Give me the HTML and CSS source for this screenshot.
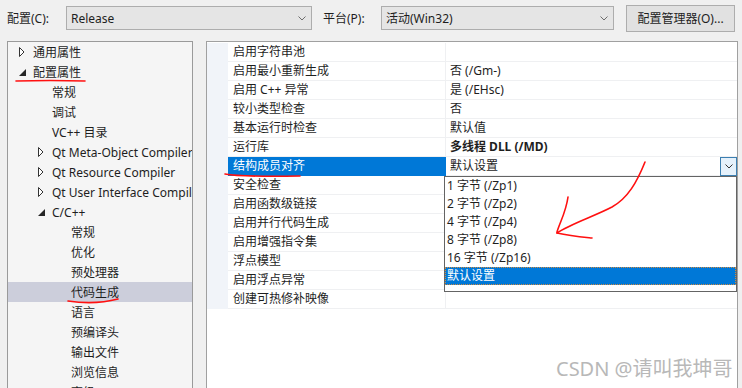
FILE: index.html
```html
<!DOCTYPE html>
<html lang="zh-CN">
<head>
    <meta charset="UTF-8">
    <title>属性页</title>
    <link rel="stylesheet" href="styles.css">
</head>
<body>
    <!-- top configuration bar -->
    <div class="toolbar">
        <span class="tb-label">配置(C):</span>
        <div class="combo combo-config">
            <span>Release</span>
            <svg class="chev" width="8" height="5" viewBox="0 0 8 5"><path d="M0.5 0.5 L4 4 L7.5 0.5" fill="none" stroke="#6d6d6d"/></svg>
        </div>
        <span class="tb-label tb-label-platform">平台(P):</span>
        <div class="combo combo-platform">
            <span>活动(Win32)</span>
            <svg class="chev" width="8" height="5" viewBox="0 0 8 5"><path d="M0.5 0.5 L4 4 L7.5 0.5" fill="none" stroke="#6d6d6d"/></svg>
        </div>
        <div class="btn">配置管理器(O)...</div>
    </div>

    <div class="main">
        <!-- left tree -->
        <div class="tree">
            <div class="node lv0"><span class="tw"><svg width="6" height="10" viewBox="0 0 6 10"><polygon points="0.5,0.5 5,5 0.5,9.5" fill="#fff" stroke="#333"/></svg></span>通用属性</div>
            <div class="node lv0"><span class="tw"><svg width="7" height="7" viewBox="0 0 7 7"><polygon points="7,0 7,7 0,7" fill="#262626"/></svg></span>配置属性</div>
            <div class="node lv1"><span class="tw"></span>常规</div>
            <div class="node lv1"><span class="tw"></span>调试</div>
            <div class="node lv1"><span class="tw"></span>VC++ 目录</div>
            <div class="node lv1"><span class="tw"><svg width="6" height="10" viewBox="0 0 6 10"><polygon points="0.5,0.5 5,5 0.5,9.5" fill="#fff" stroke="#333"/></svg></span>Qt Meta-Object Compiler</div>
            <div class="node lv1"><span class="tw"><svg width="6" height="10" viewBox="0 0 6 10"><polygon points="0.5,0.5 5,5 0.5,9.5" fill="#fff" stroke="#333"/></svg></span>Qt Resource Compiler</div>
            <div class="node lv1"><span class="tw"><svg width="6" height="10" viewBox="0 0 6 10"><polygon points="0.5,0.5 5,5 0.5,9.5" fill="#fff" stroke="#333"/></svg></span>Qt User Interface Compiler</div>
            <div class="node lv1"><span class="tw"><svg width="7" height="7" viewBox="0 0 7 7"><polygon points="7,0 7,7 0,7" fill="#262626"/></svg></span>C/C++</div>
            <div class="node lv2"><span class="tw"></span>常规</div>
            <div class="node lv2"><span class="tw"></span>优化</div>
            <div class="node lv2"><span class="tw"></span>预处理器</div>
            <div class="node lv2 selected"><span class="tw"></span>代码生成</div>
            <div class="node lv2"><span class="tw"></span>语言</div>
            <div class="node lv2"><span class="tw"></span>预编译头</div>
            <div class="node lv2"><span class="tw"></span>输出文件</div>
            <div class="node lv2"><span class="tw"></span>浏览信息</div>
            <div class="node lv2"><span class="tw"></span>高级</div>
        </div>

        <!-- property grid -->
        <div class="grid">
            <div class="row"><div class="strip"></div><div class="name">启用字符串池</div><div class="value"></div></div>
            <div class="row"><div class="strip"></div><div class="name">启用最小重新生成</div><div class="value">否 (/Gm-)</div></div>
            <div class="row"><div class="strip"></div><div class="name">启用 C++ 异常</div><div class="value">是 (/EHsc)</div></div>
            <div class="row"><div class="strip"></div><div class="name">较小类型检查</div><div class="value">否</div></div>
            <div class="row"><div class="strip"></div><div class="name">基本运行时检查</div><div class="value">默认值</div></div>
            <div class="row"><div class="strip"></div><div class="name">运行库</div><div class="value bold">多线程 DLL (/MD)</div></div>
            <div class="row active">
                <div class="strip"></div>
                <div class="name">结构成员对齐</div>
                <div class="value">
                    <span>默认设置</span>
                    <span class="drop-btn"><svg width="8" height="5" viewBox="0 0 8 5"><path d="M0.5 0.5 L4 4 L7.5 0.5" fill="none" stroke="#333"/></svg></span>
                    <div class="droplist">
                        <div class="opt">1 字节 (/Zp1)</div>
                        <div class="opt">2 字节 (/Zp2)</div>
                        <div class="opt">4 字节 (/Zp4)</div>
                        <div class="opt">8 字节 (/Zp8)</div>
                        <div class="opt">16 字节 (/Zp16)</div>
                        <div class="opt current">默认设置</div>
                    </div>
                </div>
            </div>
            <div class="row"><div class="strip"></div><div class="name">安全检查</div><div class="value"></div></div>
            <div class="row"><div class="strip"></div><div class="name">启用函数级链接</div><div class="value"></div></div>
            <div class="row"><div class="strip"></div><div class="name">启用并行代码生成</div><div class="value"></div></div>
            <div class="row"><div class="strip"></div><div class="name">启用增强指令集</div><div class="value"></div></div>
            <div class="row"><div class="strip"></div><div class="name">浮点模型</div><div class="value"></div></div>
            <div class="row"><div class="strip"></div><div class="name">启用浮点异常</div><div class="value"></div></div>
            <div class="row"><div class="strip"></div><div class="name">创建可热修补映像</div><div class="value"></div></div>
        </div>
    </div>

    <!-- hand drawn marks on the screenshot -->
    <svg class="marks" width="742" height="388" viewBox="0 0 742 388">
        <g fill="none" stroke="#ff1010" stroke-width="1.6" stroke-linecap="round">
            <path d="M16 81 Q50 80 85 81"/>
            <path d="M68 301 Q95 305 118 299"/>
            <path d="M225 174 Q240 177 300 176"/>
            <path d="M645 162 C637 182 628 198 612 207 C595 216 570 224 557 233"/>
            <path d="M568 197 C566 212 560 222 557 232"/>
            <path d="M557 233 C570 236 582 237 592 238"/>
        </g>
    </svg>
    <div class="watermark">CSDN @请叫我坤哥</div>
</body>
</html>
```

FILE: styles.css
```css
html, body {
    margin: 0;
    padding: 0;
    height: 100%;
    overflow: hidden;
}

body {
    background-color: #f0f0f0;
    font-family: "Noto Sans", "Noto Sans CJK SC", sans-serif;
    font-size: 12px;
    color: #1e1e1e;
    position: relative;
}

/* top bar */
.toolbar {
    display: flex;
    align-items: center;
    height: 36px;
    padding: 0 7px;
}

.tb-label {
    width: 59px;
}

.tb-label-platform {
    margin-left: 11px;
    width: 58px;
}

.combo {
    box-sizing: border-box;
    height: 24px;
    display: flex;
    align-items: center;
    justify-content: space-between;
    padding: 0 5px 0 4px;
    background-color: #e5e5e5;
    border: 1px solid #adadad;
}

.combo-config {
    width: 246px;
}

.combo-platform {
    width: 233px;
}

.btn {
    box-sizing: border-box;
    margin-left: 12px;
    width: 109px;
    height: 27px;
    display: flex;
    align-items: center;
    justify-content: center;
    background-color: #e1e1e1;
    border: 1px solid #adadad;
}

/* panes */
.main {
    display: flex;
    gap: 13px;
    padding: 5px 0 0 7px;
}

.tree {
    box-sizing: border-box;
    width: 186px;
    height: 360px;
    background-color: #f5f5f5;
    border: 1px solid #9a9a9a;
    overflow: hidden;
}

.node {
    height: 20px;
    display: flex;
    align-items: center;
    white-space: nowrap;
}

.node.lv0 { padding-left: 11px; }
.node.lv1 { padding-left: 30px; }
.node.lv2 { padding-left: 49px; }

.node.selected {
    background-color: #cccedb;
}

.tw {
    width: 14px;
    flex: none;
    display: flex;
    align-items: center;
}

.grid {
    box-sizing: border-box;
    width: 532px;
    height: 360px;
    background-color: #fff;
    border: 1px solid #a0a0a0;
    padding-top: 1px;
}

.row {
    display: grid;
    grid-template-columns: 21px 218px 1fr;
    height: 19px;
}

.strip {
    background-color: #f1f4f9;
}

.name, .value {
    box-sizing: border-box;
    height: 19px;
    line-height: 18px;
    border-bottom: 1px solid #eff0f2;
    white-space: nowrap;
}

.name {
    padding-left: 5px;
    border-right: 1px solid #eff0f2;
}

.value {
    padding-left: 4px;
    position: relative;
}

.value.bold {
    font-weight: bold;
}

.row.active .name {
    background-color: #0078d7;
    color: #fff;
    border-color: #0078d7;
}

.row.active .value {
    display: flex;
    justify-content: space-between;
}

.drop-btn {
    box-sizing: border-box;
    width: 17px;
    height: 19px;
    display: flex;
    align-items: center;
    justify-content: center;
    background-color: #e5f1fb;
    border: 1px solid #3c7fb1;
}

/* open dropdown */
.droplist {
    position: absolute;
    top: 19px;
    left: -2px;
    right: 0;
    box-sizing: border-box;
    background-color: #fff;
    border: 1px solid #646464;
    padding-bottom: 6px;
    z-index: 5;
}

.opt {
    height: 18px;
    line-height: 18px;
    padding-left: 2px;
}

.opt.current {
    background-color: #0078d7;
    color: #fff;
    outline: 1px dotted #d08a40;
    outline-offset: -1px;
}

.marks {
    position: absolute;
    top: 0;
    left: 0;
    pointer-events: none;
    z-index: 10;
}

.watermark {
    position: absolute;
    left: 556px;
    top: 356px;
    font-size: 20px;
    line-height: 26px;
    color: #b8b8b8;
    z-index: 10;
}
```
